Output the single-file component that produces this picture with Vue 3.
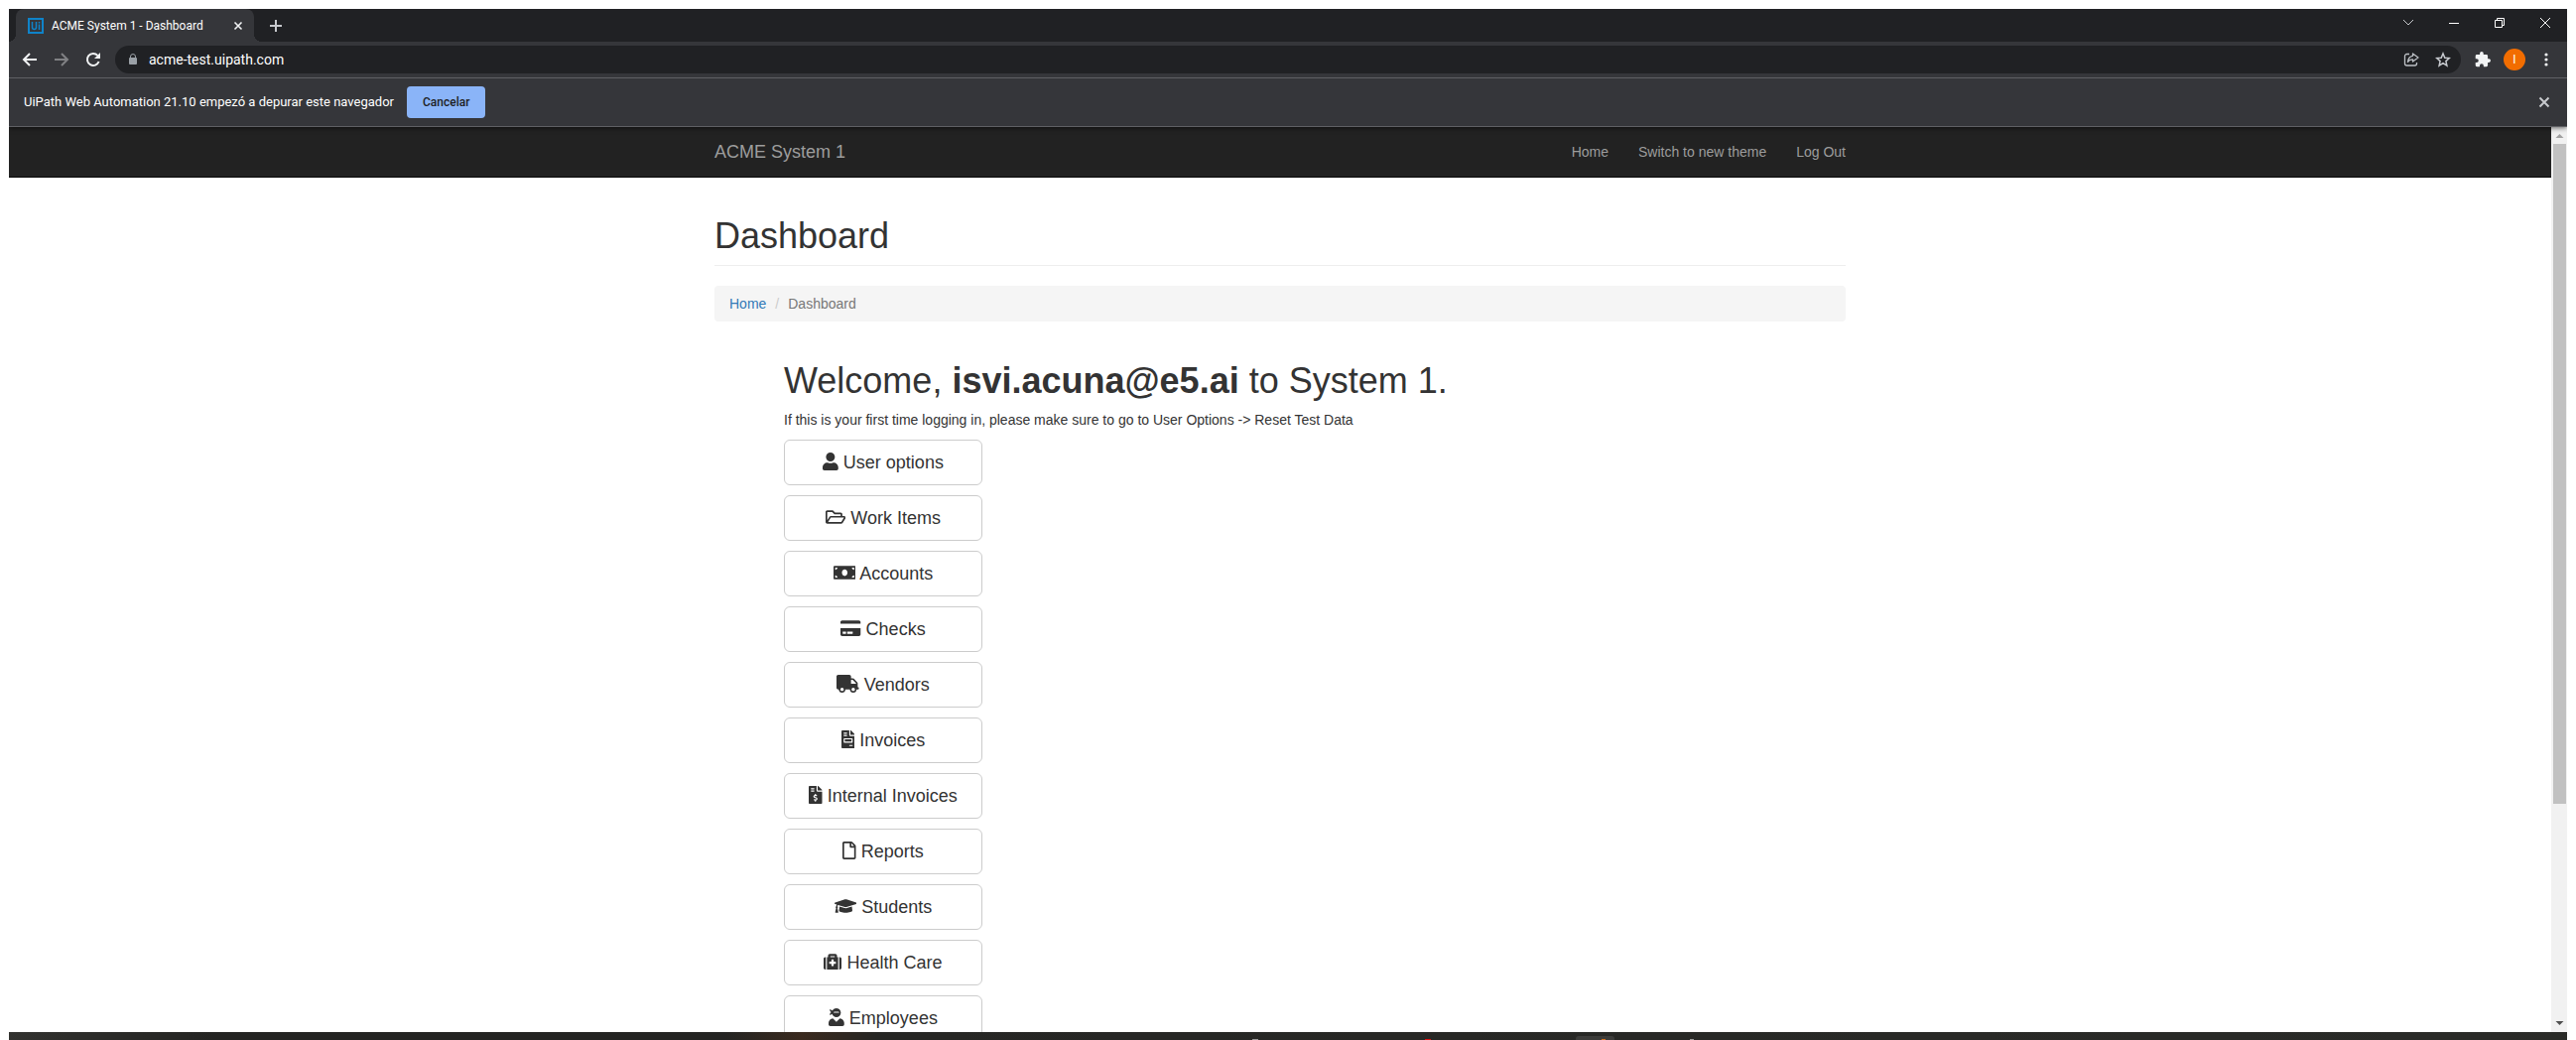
<script setup>
const menu = [
  { label: 'User options', w: 448, d: 'M224 256c70.7 0 128-57.3 128-128S294.7 0 224 0 96 57.3 96 128s57.3 128 128 128zm89.6 32h-16.7c-22.2 10.2-46.9 16-72.9 16s-50.6-5.8-72.9-16h-16.7C60.2 288 0 348.2 0 422.4V464c0 26.5 21.5 48 48 48h352c26.5 0 48-21.5 48-48v-41.6c0-74.2-60.2-134.4-134.4-134.4z' },
  { label: 'Work Items', w: 576, d: 'M527.9 224H480v-48c0-26.5-21.5-48-48-48H272l-64-64H48C21.5 64 0 85.5 0 112v288c0 26.5 21.5 48 48 48h400c16.5 0 31.9-8.5 40.7-22.6l79.9-128c20-31.9-3-73.4-40.7-73.4zM48 118c0-3.3 2.7-6 6-6h134.1l64 64H426c3.3 0 6 2.7 6 6v42H152c-16.8 0-32.4 8.8-41.1 23.2L48 351.4zm400 282H72l77.2-128H528z' },
  { label: 'Accounts', w: 640, d: 'M608 64H32C14.33 64 0 78.33 0 96v320c0 17.67 14.33 32 32 32h576c17.67 0 32-14.33 32-32V96c0-17.67-14.33-32-32-32zM48 400v-64c35.35 0 64 28.65 64 64H48zm0-224v-64h64c0 35.35-28.65 64-64 64zm272 176c-44.19 0-80-42.99-80-96 0-53.02 35.82-96 80-96s80 42.98 80 96c0 53.03-35.83 96-80 96zm272 48h-64c0-35.35 28.65-64 64-64v64zm0-224c-35.35 0-64-28.65-64-64h64v64z' },
  { label: 'Checks', w: 576, d: 'M0 432c0 26.5 21.5 48 48 48h480c26.5 0 48-21.5 48-48V256H0v176zm192-68c0-6.6 5.4-12 12-12h136c6.6 0 12 5.4 12 12v40c0 6.6-5.4 12-12 12H204c-6.6 0-12-5.4-12-12v-40zm-128 0c0-6.6 5.4-12 12-12h72c6.6 0 12 5.4 12 12v40c0 6.6-5.4 12-12 12H76c-6.6 0-12-5.4-12-12v-40zM576 80v48H0V80c0-26.5 21.5-48 48-48h480c26.5 0 48 21.5 48 48z' },
  { label: 'Vendors', w: 640, d: 'M624 352h-16V243.9c0-12.7-5.1-24.9-14.1-33.9L494 110.1c-9-9-21.2-14.1-33.9-14.1H416V48c0-26.5-21.5-48-48-48H48C21.5 0 0 21.5 0 48v320c0 26.5 21.5 48 48 48h16c0 53 43 96 96 96s96-43 96-96h128c0 53 43 96 96 96s96-43 96-96h48c8.800 0 16-7.200 16-16v-32c0-8.800-7.200-16-16-16zM160 464c-26.500 0-48-21.500-48-48s21.500-48 48-48 48 21.500 48 48-21.500 48-48 48zm320 0c-26.500 0-48-21.500-48-48s21.500-48 48-48 48 21.500 48 48-21.500 48-48 48zm80-208H416V144h44.1l99.9 99.9V256z' },
  { label: 'Invoices', w: 384, d: 'M288 256H96v64h192v-64zm89-151L279.1 7c-4.5-4.5-10.6-7-17-7H256v128h128v-6.1c0-6.3-2.5-12.4-7-16.9zm-153 31V0H24C10.7 0 0 10.7 0 24v464c0 13.3 10.7 24 24 24h336c13.3 0 24-10.7 24-24V160H248c-13.2 0-24-10.8-24-24zM64 72c0-4.42 3.58-8 8-8h80c4.42 0 8 3.58 8 8v16c0 4.42-3.58 8-8 8H72c-4.42 0-8-3.58-8-8V72zm0 64c0-4.42 3.58-8 8-8h80c4.42 0 8 3.58 8 8v16c0 4.42-3.58 8-8 8H72c-4.42 0-8-3.58-8-8v-16zm256 304c0 4.42-3.58 8-8 8h-80c-4.42 0-8-3.58-8-8v-16c0-4.42 3.58-8 8-8h80c4.42 0 8 3.58 8 8v16zm0-200v96c0 8.84-7.16 16-16 16H80c-8.84 0-16-7.16-16-16v-96c0-8.84 7.16-16 16-16h224c8.84 0 16 7.16 16 16z' },
  { label: 'Internal Invoices', w: 384, d: 'M377 105L279.1 7c-4.5-4.5-10.6-7-17-7H256v128h128v-6.1c0-6.3-2.5-12.4-7-16.9zm-153 31V0H24C10.7 0 0 10.7 0 24v464c0 13.3 10.7 24 24 24h336c13.3 0 24-10.7 24-24V160H248c-13.2 0-24-10.8-24-24zM64 72c0-4.42 3.58-8 8-8h80c4.42 0 8 3.58 8 8v16c0 4.42-3.58 8-8 8H72c-4.42 0-8-3.58-8-8V72zm0 80v-16c0-4.42 3.58-8 8-8h80c4.42 0 8 3.58 8 8v16c0 4.42-3.58 8-8 8H72c-4.42 0-8-3.58-8-8zm144 263.88V440c0 4.42-3.58 8-8 8h-16c-4.42 0-8-3.58-8-8v-24.29c-11.29-.58-22.27-4.52-31.37-11.35-3.9-2.93-4.1-8.77-.57-12.14l11.75-11.21c2.77-2.64 6.89-2.76 10.13-.73 3.87 2.42 8.26 3.72 12.82 3.72h28.11c6.5 0 11.8-5.92 11.8-13.19 0-5.95-3.61-11.19-8.77-12.73l-45-13.5c-18.59-5.58-31.58-23.42-31.58-43.39 0-24.52 19.05-44.44 42.67-45.07V232c0-4.42 3.58-8 8-8h16c4.42 0 8 3.58 8 8v24.29c11.29.58 22.27 4.51 31.37 11.35 3.9 2.93 4.1 8.77.57 12.14l-11.75 11.21c-2.77 2.64-6.89 2.76-10.13.73-3.87-2.43-8.26-3.72-12.82-3.72h-28.11c-6.5 0-11.8 5.92-11.8 13.19 0 5.95 3.61 11.19 8.77 12.73l45 13.5c18.59 5.58 31.58 23.42 31.58 43.39 0 24.53-19.05 44.44-42.67 45.07z' },
  { label: 'Reports', w: 384, d: 'M369.9 97.9L286 14C277 5 264.8-.1 252.1-.1H48C21.5 0 0 21.5 0 48v416c0 26.5 21.5 48 48 48h288c26.5 0 48-21.5 48-48V131.9c0-12.7-5.1-25-14.1-34zM332.1 128H256V51.9l76.1 76.1zM48 464V48h160v104c0 13.3 10.7 24 24 24h104v288H48z' },
  { label: 'Students', w: 640, d: 'M622.34 153.2L343.4 67.5c-15.2-4.67-31.6-4.67-46.79 0L17.66 153.2c-23.54 7.23-23.54 38.36 0 45.59l48.63 14.94c-10.67 13.19-17.23 29.28-17.88 46.9C38.78 266.15 32 276.11 32 288c0 10.78 5.68 19.85 13.86 25.65L20.33 428.53C18.11 438.52 25.71 448 35.94 448h56.11c10.24 0 17.84-9.48 15.62-19.47L82.14 313.65C90.32 307.85 96 298.78 96 288c0-11.57-6.47-21.25-15.66-26.87.76-15.02 8.44-28.3 20.69-36.72L296.6 284.5c9.06 2.78 26.44 6.25 46.79 0l278.95-85.7c23.55-7.24 23.55-38.36 0-45.6zM352.79 315.09c-28.53 8.76-52.84 3.92-65.59 0l-145.02-44.55L128 384c0 35.35 85.96 64 192 64s192-28.65 192-64l-14.18-113.47-145.03 44.56z' },
  { label: 'Health Care', w: 512, d: 'M96 480h320V128h-32V80c0-26.51-21.49-48-48-48H176c-26.51 0-48 21.49-48 48v48H96v352zm96-384h128v32H192V96zm320 80v256c0 26.51-21.49 48-48 48h-16V128h16c26.51 0 48 21.49 48 48zM64 480H48c-26.51 0-48-21.49-48-48V176c0-26.51 21.49-48 48-48h16v352zm288-208v32c0 8.837-7.163 16-16 16h-48v48c0 8.837-7.163 16-16 16h-32c-8.837 0-16-7.163-16-16v-48h-48c-8.837 0-16-7.163-16-16v-32c0-8.837 7.163-16 16-16h48v-48c0-8.837 7.163-16 16-16h32c8.837 0 16 7.163 16 16v48h48c8.837 0 16 7.163 16 16z' },
  { label: 'Employees', w: 448, d: 'M325.4 289.2L224 390.6 122.6 289.2C54 295.3 0 352.2 0 422.4V464c0 26.5 21.5 48 48 48h352c26.5 0 48-21.5 48-48v-41.6c0-70.2-54-127.1-122.6-133.2zM32 192c27.3 0 51.8-11.5 69.2-29.7 15.1 53.9 64 93.7 122.8 93.7 70.7 0 128-57.3 128-128S294.7 0 224 0c-50.4 0-93.6 29.4-114.5 71.8C92.1 47.8 64 32 32 32c0 33.4 17.1 62.8 43.1 80-26 17.2-43.1 46.6-43.1 80zm144-96h96c17.7 0 32 14.3 32 32H144c0-17.7 14.3-32 32-32z' },
]
</script>

<template>
  <div class="screen">
    <header class="chrome">
      <div class="tabstrip">
        <div class="tab">
          <svg class="favicon" width="16" height="16" viewBox="0 0 16 16" fill="none" stroke="#0f83c9">
            <rect x="1" y="1" width="14" height="14" stroke-width="2" />
            <path d="M4.500 4v5.500q0 2 2 2t2-2V4M11.500 6.500V12M11.500 4v1.500" stroke-width="1.500" />
          </svg>
          <span class="tab-title">ACME System 1 - Dashboard</span>
          <button class="bare" aria-label="Close tab">
            <svg width="16" height="16" viewBox="0 0 16 16" stroke="#f1f3f4" stroke-width="1.600"><path d="M4.500 4.500l7 7M11.500 4.500l-7 7" /></svg>
          </button>
        </div>
        <button class="bare new-tab" aria-label="New tab">
          <svg width="16" height="16" viewBox="0 0 16 16" stroke="#c7c9cd" stroke-width="2"><path d="M8 2v12M2 8h12" /></svg>
        </button>
        <div class="window-buttons">
          <button class="bare" aria-label="Search tabs"><svg width="12" height="12" viewBox="0 0 12 12" fill="none" stroke="#c7c9cd"><path d="M1 3l5 5 5-5" /></svg></button>
          <button class="bare" aria-label="Minimize"><svg width="12" height="12" viewBox="0 0 12 12" stroke="#fff"><path d="M1 6.500h10" /></svg></button>
          <button class="bare" aria-label="Restore"><svg width="12" height="12" viewBox="0 0 12 12" fill="none" stroke="#fff"><path d="M1.500 3.500h7v7h-7zM3.500 3.500v-2h7v7h-2" /></svg></button>
          <button class="bare" aria-label="Close"><svg width="12" height="12" viewBox="0 0 12 12" stroke="#fff"><path d="M1 1l10 10M11 1L1 11" /></svg></button>
        </div>
      </div>

      <div class="toolbar">
        <div class="nav-buttons">
          <button class="bare" aria-label="Back"><svg width="16" height="16" viewBox="0 0 16 16" fill="none" stroke="#f1f3f4" stroke-width="2"><path d="M15 8H2.500M8 2L2 8l6 6" /></svg></button>
          <button class="bare" aria-label="Forward"><svg width="16" height="16" viewBox="0 0 16 16" fill="none" stroke="#808184" stroke-width="2"><path d="M1 8h12.500M8 2l6 6-6 6" /></svg></button>
          <button class="bare" aria-label="Reload"><svg width="16" height="16" viewBox="0 0 16 16" fill="none" stroke="#f1f3f4" stroke-width="2"><path d="M13.600 10A6 6 0 1 1 12.400 3.900" /><path d="M15 1v6H9z" fill="#f1f3f4" stroke="none" /></svg></button>
        </div>
        <div class="omnibox">
          <svg width="12" height="14" viewBox="0 0 12 14"><path d="M3.500 6V4a2.500 2.500 0 0 1 5 0v2" fill="none" stroke="#9aa0a6" /><rect x="2" y="5" width="8" height="7" rx="1" fill="#9aa0a6" /></svg>
          <input class="url" type="text" value="acme-test.uipath.com" aria-label="Address" />
          <button class="bare" aria-label="Share"><svg width="16" height="16" viewBox="0 0 16 16" fill="none" stroke="#bdc1c6" stroke-width="1.300" stroke-linejoin="round"><path d="M6 2.500H3.500a2 2 0 0 0-2 2v7.500a2 2 0 0 0 2 2h8a2 2 0 0 0 2-2V11" /><path d="M9.500 2l5.500 4-5.500 4V7.800Q6 7.800 4.500 10.500 5 5 9.500 4.300z" /></svg></button>
          <button class="bare" aria-label="Bookmark"><svg width="16" height="16" viewBox="0 0 16 16" fill="none" stroke="#c7cacf" stroke-width="1.500"><path d="M8 2l1.800 4.200 4.500.4-3.400 3 1 4.500L8 11.700l-3.900 2.400 1-4.500-3.400-3 4.500-.4z" /></svg></button>
        </div>
        <div class="actions">
          <button class="bare" aria-label="Extensions"><svg width="16" height="16" viewBox="1 1 22 22" fill="#f1f3f4"><path d="M20.500 11H19V7a2 2 0 0 0-2-2h-4V3.500a2.500 2.500 0 0 0-5 0V5H4a2 2 0 0 0-2 2v3.800h1.500a2.700 2.700 0 0 1 0 5.400H2V20a2 2 0 0 0 2 2h3.800v-1.500a2.700 2.700 0 0 1 5.400 0V22H17a2 2 0 0 0 2-2v-4h1.500a2.500 2.500 0 0 0 0-5z" /></svg></button>
          <button class="avatar" aria-label="Profile">I</button>
          <button class="bare" aria-label="Menu"><svg width="16" height="16" viewBox="0 0 16 16" fill="#f1f3f4"><circle cx="8" cy="3" r="1.600" /><circle cx="8" cy="8" r="1.600" /><circle cx="8" cy="13" r="1.600" /></svg></button>
        </div>
      </div>

      <div class="infobar">
        <span>UiPath Web Automation 21.10 empezó a depurar este navegador</span>
        <button class="cancel">Cancelar</button>
        <button class="bare dismiss" aria-label="Dismiss"><svg width="16" height="16" viewBox="0 0 16 16" stroke="#c7c9cd" stroke-width="2"><path d="M3.500 3.500l9 9M12.500 3.500l-9 9" /></svg></button>
      </div>
    </header>

    <div class="viewport">
      <div class="page">
        <nav class="navbar">
          <div class="container nav-inner">
            <a class="brand" href="#">ACME System 1</a>
            <a href="#">Home</a>
            <a href="#">Switch to new theme</a>
            <a href="#">Log Out</a>
          </div>
        </nav>
        <main class="container">
          <h1 class="page-header">Dashboard</h1>
          <ol class="breadcrumb">
            <li><a href="#">Home</a></li>
            <li class="slash">/</li>
            <li>Dashboard</li>
          </ol>
          <section class="welcome">
            <h1>Welcome, <strong>isvi.acuna@e5.ai</strong> to System 1.</h1>
            <p>If this is your first time logging in, please make sure to go to User Options -&gt; Reset Test Data</p>
            <div class="menu">
              <button v-for="item in menu" :key="item.label" class="menu-button">
                <svg class="icon" :viewBox="`0 0 ${item.w} 512`"><path :d="item.d" /></svg>
                {{ item.label }}
              </button>
            </div>
          </section>
        </main>
      </div>
      <div class="scrollbar" aria-hidden="true">
        <svg class="arrow" width="16" height="17" viewBox="0 0 16 17" fill="#a0a0a0"><path d="M4.500 11h8l-4-4z" /></svg>
        <div class="thumb"></div>
        <div class="track"></div>
        <svg class="arrow" width="16" height="17" viewBox="0 0 16 17" fill="#505050"><path d="M4.500 6h8l-4 4z" /></svg>
      </div>
    </div>

    <footer class="taskbar"><span class="active-app"></span></footer>
  </div>
</template>

<style>
body {
  margin: 0;
  background: #fff;
}
</style>

<style scoped>
* {
  box-sizing: border-box;
}
.screen {
  display: flex;
  flex-direction: column;
  height: 100vh;
  padding: 9px 9px 0;
  overflow: hidden;
  font: 14px/20px "Liberation Sans", Arial, sans-serif;
  color: #333;
}
button {
  font: inherit;
  cursor: pointer;
}
a {
  text-decoration: none;
}
.bare {
  display: flex;
  padding: 0;
  border: 0;
  background: none;
}
.chrome {
  position: relative;
  flex: none;
  background: #35363a;
  color: #fff;
  font: 12px/16px Roboto, "Noto Sans", sans-serif;
  box-shadow: 0 1px 5px rgba(0, 0, 0, 0.6);
  clip-path: inset(0 0 -8px 0);
}
.tabstrip {
  display: flex;
  align-items: center;
  height: 33px;
  padding-left: 7px;
  background: #202124;
}
.tab {
  position: relative;
  display: flex;
  align-items: center;
  align-self: stretch;
  gap: 8px;
  width: 240px;
  padding: 0 8px 0 12px;
  background: #35363a;
  border-radius: 8px 8px 0 0;
}
.tab::before,
.tab::after {
  content: "";
  position: absolute;
  bottom: 0;
  width: 8px;
  height: 8px;
}
.tab::before {
  right: 100%;
  background: radial-gradient(circle at 0 0, #202124 8px, #35363a 8px);
}
.tab::after {
  left: 100%;
  background: radial-gradient(circle at 100% 0, #202124 8px, #35363a 8px);
}
.tab-title {
  flex: 1;
  white-space: nowrap;
}
.new-tab {
  margin-left: 14px;
}
.window-buttons {
  display: flex;
  gap: 34px;
  margin-left: auto;
  padding: 0 16px 6px 0;
}
.toolbar {
  display: flex;
  align-items: center;
  height: 36px;
}
.nav-buttons {
  display: flex;
  gap: 16px;
  padding: 0 14px 0 13px;
}
.omnibox {
  display: flex;
  flex: 1;
  align-items: center;
  gap: 16px;
  height: 28px;
  padding: 0 10px 0 12px;
  border-radius: 14px;
  background: #202124;
}
.url {
  flex: 1;
  min-width: 0;
  padding: 0;
  border: 0;
  margin-left: -6px;
  background: none;
  color: #fff;
  font: 14px/20px Roboto, "Noto Sans", sans-serif;
  outline: none;
}
.actions {
  display: flex;
  align-items: center;
  gap: 13px;
  padding: 0 13px 0 14px;
}
.avatar {
  width: 22px;
  height: 22px;
  padding: 0;
  border: 0;
  border-radius: 50%;
  background: #f26d00;
  color: #fff;
}
.infobar {
  display: flex;
  align-items: center;
  gap: 13px;
  height: 50px;
  padding: 0 15px;
  border: solid #5f6064;
  border-width: 1px 0;
  font-size: 13px;
}
.cancel {
  height: 32px;
  padding: 0 16px;
  border: 0;
  border-radius: 4px;
  background: #8ab4f8;
  color: #202124;
  font-size: 12px;
  font-weight: 500;
}
.dismiss {
  margin-left: auto;
}
.viewport {
  display: flex;
  flex: 1;
  min-height: 0;
}
.page {
  flex: 1;
  overflow: hidden;
}
.navbar {
  background: #222;
  border-bottom: 1px solid #080808;
}
.container {
  max-width: 1140px;
  margin: 0 auto;
}
.nav-inner {
  display: flex;
  align-items: center;
  gap: 30px;
  height: 50px;
}
.nav-inner a {
  color: #9d9d9d;
}
.nav-inner .brand {
  margin-right: auto;
  font-size: 18px;
}
h1 {
  margin: 0;
  font-size: 36px;
  font-weight: 500;
  line-height: 39px;
}
.page-header {
  margin: 39px 0 20px;
  padding-bottom: 10px;
  border-bottom: 1px solid #eee;
}
.breadcrumb {
  display: flex;
  gap: 9px;
  margin: 0 0 40px;
  padding: 8px 15px;
  border-radius: 4px;
  background: #f5f5f5;
  color: #777;
  list-style: none;
}
.breadcrumb a {
  color: #337ab7;
}
.breadcrumb .slash {
  color: #ccc;
}
.welcome {
  padding-left: 70px;
}
p {
  margin: 10px 0;
}
.menu {
  display: grid;
  gap: 10px;
  width: 200px;
}
.menu-button {
  height: 46px;
  padding: 10px 0;
  border: 1px solid #ccc;
  border-radius: 6px;
  background: #fff;
  color: #333;
  font-size: 18px;
  line-height: 24px;
  white-space: nowrap;
}
.icon {
  height: 18px;
  vertical-align: -2px;
  fill: currentColor;
}
.scrollbar {
  display: flex;
  flex-direction: column;
  width: 16px;
  background: #f1f1f1;
}
.arrow {
  flex: none;
}
.thumb {
  flex: 757;
  margin: 0 1px 0 2px;
  background: #c1c1c1;
}
.track {
  flex: 243;
}
.taskbar {
  display: flex;
  align-items: flex-end;
  flex: none;
  height: 8px;
  padding-left: 61.25%;
  background:
    linear-gradient(#999, #999) 48.7% 100% / 6px 1px no-repeat,
    linear-gradient(#e01010, #e01010) 55.5% 100% / 6px 1px no-repeat,
    linear-gradient(#999, #999) 65.8% 100% / 4px 1px no-repeat,
    linear-gradient(90deg, #32322f, #242422 8%, #242422 28%, #3a2a1f 31%, #262624 34%, #2a2b28);
}
.active-app {
  width: 39px;
  height: 4px;
  border-radius: 3px 3px 0 0;
  background: linear-gradient(#d07020, #d07020) 75% 100% / 4px 1px no-repeat, #3c3c3a;
}
</style>
